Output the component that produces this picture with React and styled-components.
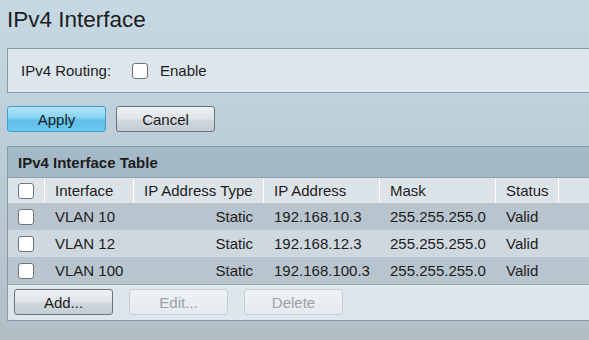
import styled, { createGlobalStyle } from 'styled-components';

const GlobalStyle = createGlobalStyle`
  html, body {
    margin: 0;
    padding: 0;
    overflow: hidden;
  }
  body {
    width: 589px;
    height: 340px;
    background: linear-gradient(180deg, #c6d9e3 0%, #bccdd7 45%, #b3bec6 100%);
    font-family: 'Liberation Sans', Arial, sans-serif;
    color: #1c1c1c;
  }
`;

const Page = styled.div`
  width: 589px;
  padding: 4px 0 0 7px;
  box-sizing: border-box;
`;

const Title = styled.h1`
  margin: 0;
  height: 44px;
  font-size: 22.5px;
  font-weight: normal;
  line-height: 32px;
`;

const RoutingPanel = styled.div`
  display: flex;
  align-items: center;
  height: 43px;
  padding-left: 13px;
  border: 1px solid #849ba8;
  border-right: none;
  background: #dce6ec;
  font-size: 15px;
`;

const Label = styled.span`
  width: 111px;
`;

const Check = styled.span`
  display: inline-block;
  width: 14px;
  height: 14px;
  border: 1px solid #6d757c;
  border-radius: 3px;
  background: #fff;
  box-sizing: content-box;
`;

const CheckLabel = styled.span`
  margin-left: 12px;
`;

const ButtonRow = styled.div`
  display: flex;
  gap: ${(p) => p.$gap || 10}px;
  margin-top: ${(p) => p.$top || 0}px;
`;

const Button = styled.button`
  width: 99px;
  height: 26px;
  padding: 0;
  border-radius: 3px;
  font-family: inherit;
  font-size: 15px;
  color: ${(p) => (p.$disabled ? '#9aa3ab' : '#1c1c1c')};
  border: 1px solid
    ${(p) => (p.$primary ? '#3f9fcf' : p.$disabled ? '#c7cfd5' : '#6b737a')};
  background: ${(p) =>
    p.$primary
      ? 'linear-gradient(180deg, #b4e6f8 0%, #86d3f2 45%, #5ec0eb 55%, #6cc7ee 100%)'
      : p.$disabled
        ? 'linear-gradient(180deg, #eef2f4 0%, #e4eaee 100%)'
        : 'linear-gradient(180deg, #eef1f3 0%, #dfe4e8 50%, #cfd8de 55%, #c3cdd4 100%)'};
`;

const TablePanel = styled.div`
  margin-top: 14px;
  border: 1px solid #849ba8;
  border-right: none;
`;

const TableTitle = styled.div`
  height: 30px;
  padding-left: 10px;
  display: flex;
  align-items: center;
  background: #a3b9c8;
  border-bottom: 1px solid #8aa1af;
  font-size: 15px;
  font-weight: bold;
`;

const Grid = styled.div`
  display: grid;
  grid-template-columns: 36px 88px 129px 115px 115px 62px 1fr;
  column-gap: 1px;
`;

const HeadCell = styled.div`
  height: 25px;
  display: flex;
  align-items: center;
  padding-left: ${(p) => (p.$check ? 10 : 10)}px;
  background: #dce4ea;
  font-size: 15px;
  box-shadow: 1px 0 0 #fff;
`;

const Cell = styled.div`
  height: 27px;
  display: flex;
  align-items: center;
  justify-content: ${(p) => (p.$right ? 'flex-end' : 'flex-start')};
  padding: 0 ${(p) => (p.$right ? 11 : 0)}px 0 ${(p) => (p.$check ? 10 : p.$right ? 0 : 10)}px;
  background: ${(p) => (p.$odd ? '#cfd8df' : '#b9c5ce')};
  margin-right: -1px;
  font-size: 15px;
`;

const Footer = styled.div`
  height: 36px;
  padding: 4px 0 0 6px;
  box-sizing: border-box;
  background: #dde6eb;
  border-top: 1px solid #9aaab4;
`;

const rows = [
  ['VLAN 10', 'Static', '192.168.10.3', '255.255.255.0', 'Valid'],
  ['VLAN 12', 'Static', '192.168.12.3', '255.255.255.0', 'Valid'],
  ['VLAN 100', 'Static', '192.168.100.3', '255.255.255.0', 'Valid'],
];

const headers = ['Interface', 'IP Address Type', 'IP Address', 'Mask', 'Status'];

export default function App() {
  return (
    <>
      <GlobalStyle />
      <Page>
        <Title>IPv4 Interface</Title>
        <RoutingPanel>
          <Label>IPv4 Routing:</Label>
          <Check />
          <CheckLabel>Enable</CheckLabel>
        </RoutingPanel>
        <ButtonRow $top={13}>
          <Button $primary>Apply</Button>
          <Button>Cancel</Button>
        </ButtonRow>
        <TablePanel>
          <TableTitle>IPv4 Interface Table</TableTitle>
          <Grid>
            <HeadCell $check>
              <Check />
            </HeadCell>
            {headers.map((h) => (
              <HeadCell key={h}>{h}</HeadCell>
            ))}
            <HeadCell />
            {rows.map((r, i) => (
              <Row key={r[0]} data={r} odd={i % 2 === 1} />
            ))}
          </Grid>
          <Footer>
            <ButtonRow $gap={16}>
              <Button>Add...</Button>
              <Button $disabled>Edit...</Button>
              <Button $disabled>Delete</Button>
            </ButtonRow>
          </Footer>
        </TablePanel>
      </Page>
    </>
  );
}

function Row({ data, odd }) {
  const [name, type, ip, mask, status] = data;
  return (
    <>
      <Cell $odd={odd} $check>
        <Check />
      </Cell>
      <Cell $odd={odd}>{name}</Cell>
      <Cell $odd={odd} $right>
        {type}
      </Cell>
      <Cell $odd={odd}>{ip}</Cell>
      <Cell $odd={odd}>{mask}</Cell>
      <Cell $odd={odd}>{status}</Cell>
      <Cell $odd={odd} />
    </>
  );
}
